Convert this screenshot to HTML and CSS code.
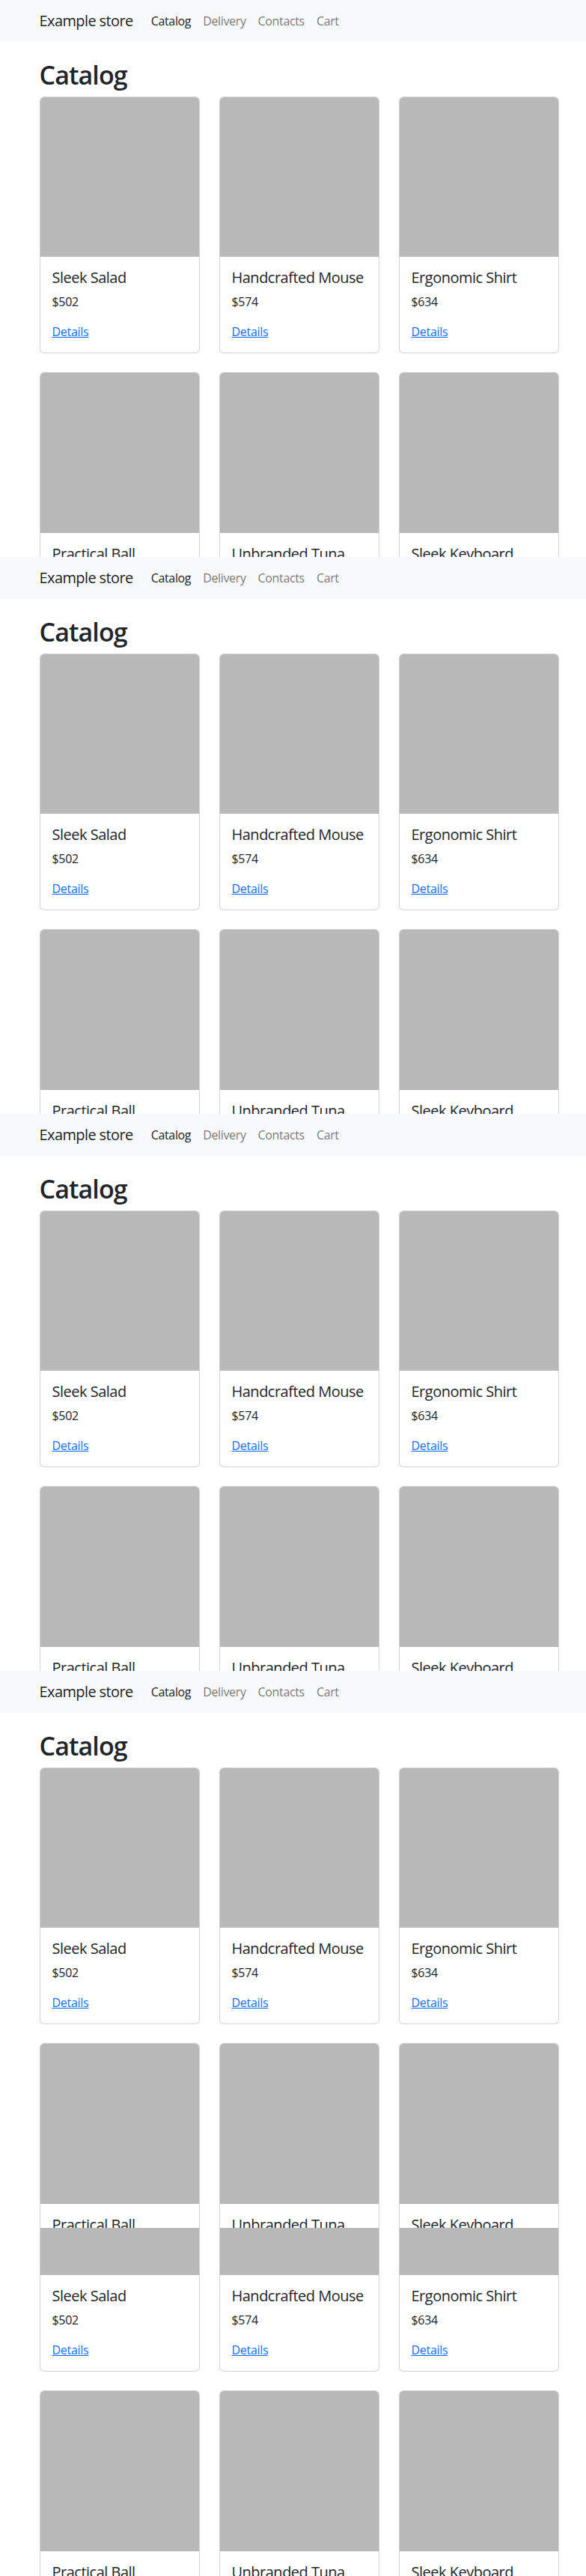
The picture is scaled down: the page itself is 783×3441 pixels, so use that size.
FILE: index.html
```html
<!DOCTYPE html>
<html lang="en">
<head>
<meta charset="utf-8">
<title>Example store</title>
<link rel="stylesheet" href="styles.css">
</head>
<body>

<section class="shot">
  <div class="page">
    <nav class="navbar"><div class="container nav-inner">
      <a class="brand" href="#">Example store</a>
      <a class="nav-link active" href="#">Catalog</a><a class="nav-link" href="#">Delivery</a><a class="nav-link" href="#">Contacts</a><a class="nav-link" href="#">Cart</a>
    </div></nav>
    <main class="container main">
      <h1 class="title">Catalog</h1>
      <div class="grid">
        <div class="card"><div class="card-img"></div><div class="card-body"><h5 class="card-title">Sleek Salad</h5><p class="price">$502</p><a class="details" href="#">Details</a></div></div>
        <div class="card"><div class="card-img"></div><div class="card-body"><h5 class="card-title">Handcrafted Mouse</h5><p class="price">$574</p><a class="details" href="#">Details</a></div></div>
        <div class="card"><div class="card-img"></div><div class="card-body"><h5 class="card-title">Ergonomic Shirt</h5><p class="price">$634</p><a class="details" href="#">Details</a></div></div>
        <div class="card"><div class="card-img"></div><div class="card-body"><h5 class="card-title">Practical Ball</h5><p class="price">$0</p><a class="details" href="#">Details</a></div></div>
        <div class="card"><div class="card-img"></div><div class="card-body"><h5 class="card-title">Unbranded Tuna</h5><p class="price">$0</p><a class="details" href="#">Details</a></div></div>
        <div class="card"><div class="card-img"></div><div class="card-body"><h5 class="card-title">Sleek Keyboard</h5><p class="price">$0</p><a class="details" href="#">Details</a></div></div>
      </div>
    </main>
  </div>
</section>

<section class="shot">
  <div class="page">
    <nav class="navbar"><div class="container nav-inner">
      <a class="brand" href="#">Example store</a>
      <a class="nav-link active" href="#">Catalog</a><a class="nav-link" href="#">Delivery</a><a class="nav-link" href="#">Contacts</a><a class="nav-link" href="#">Cart</a>
    </div></nav>
    <main class="container main">
      <h1 class="title">Catalog</h1>
      <div class="grid">
        <div class="card"><div class="card-img"></div><div class="card-body"><h5 class="card-title">Sleek Salad</h5><p class="price">$502</p><a class="details" href="#">Details</a></div></div>
        <div class="card"><div class="card-img"></div><div class="card-body"><h5 class="card-title">Handcrafted Mouse</h5><p class="price">$574</p><a class="details" href="#">Details</a></div></div>
        <div class="card"><div class="card-img"></div><div class="card-body"><h5 class="card-title">Ergonomic Shirt</h5><p class="price">$634</p><a class="details" href="#">Details</a></div></div>
        <div class="card"><div class="card-img"></div><div class="card-body"><h5 class="card-title">Practical Ball</h5><p class="price">$0</p><a class="details" href="#">Details</a></div></div>
        <div class="card"><div class="card-img"></div><div class="card-body"><h5 class="card-title">Unbranded Tuna</h5><p class="price">$0</p><a class="details" href="#">Details</a></div></div>
        <div class="card"><div class="card-img"></div><div class="card-body"><h5 class="card-title">Sleek Keyboard</h5><p class="price">$0</p><a class="details" href="#">Details</a></div></div>
      </div>
    </main>
  </div>
</section>

<section class="shot">
  <div class="page">
    <nav class="navbar"><div class="container nav-inner">
      <a class="brand" href="#">Example store</a>
      <a class="nav-link active" href="#">Catalog</a><a class="nav-link" href="#">Delivery</a><a class="nav-link" href="#">Contacts</a><a class="nav-link" href="#">Cart</a>
    </div></nav>
    <main class="container main">
      <h1 class="title">Catalog</h1>
      <div class="grid">
        <div class="card"><div class="card-img"></div><div class="card-body"><h5 class="card-title">Sleek Salad</h5><p class="price">$502</p><a class="details" href="#">Details</a></div></div>
        <div class="card"><div class="card-img"></div><div class="card-body"><h5 class="card-title">Handcrafted Mouse</h5><p class="price">$574</p><a class="details" href="#">Details</a></div></div>
        <div class="card"><div class="card-img"></div><div class="card-body"><h5 class="card-title">Ergonomic Shirt</h5><p class="price">$634</p><a class="details" href="#">Details</a></div></div>
        <div class="card"><div class="card-img"></div><div class="card-body"><h5 class="card-title">Practical Ball</h5><p class="price">$0</p><a class="details" href="#">Details</a></div></div>
        <div class="card"><div class="card-img"></div><div class="card-body"><h5 class="card-title">Unbranded Tuna</h5><p class="price">$0</p><a class="details" href="#">Details</a></div></div>
        <div class="card"><div class="card-img"></div><div class="card-body"><h5 class="card-title">Sleek Keyboard</h5><p class="price">$0</p><a class="details" href="#">Details</a></div></div>
      </div>
    </main>
  </div>
</section>

<section class="shot">
  <div class="page">
    <nav class="navbar"><div class="container nav-inner">
      <a class="brand" href="#">Example store</a>
      <a class="nav-link active" href="#">Catalog</a><a class="nav-link" href="#">Delivery</a><a class="nav-link" href="#">Contacts</a><a class="nav-link" href="#">Cart</a>
    </div></nav>
    <main class="container main">
      <h1 class="title">Catalog</h1>
      <div class="grid">
        <div class="card"><div class="card-img"></div><div class="card-body"><h5 class="card-title">Sleek Salad</h5><p class="price">$502</p><a class="details" href="#">Details</a></div></div>
        <div class="card"><div class="card-img"></div><div class="card-body"><h5 class="card-title">Handcrafted Mouse</h5><p class="price">$574</p><a class="details" href="#">Details</a></div></div>
        <div class="card"><div class="card-img"></div><div class="card-body"><h5 class="card-title">Ergonomic Shirt</h5><p class="price">$634</p><a class="details" href="#">Details</a></div></div>
        <div class="card"><div class="card-img"></div><div class="card-body"><h5 class="card-title">Practical Ball</h5><p class="price">$0</p><a class="details" href="#">Details</a></div></div>
        <div class="card"><div class="card-img"></div><div class="card-body"><h5 class="card-title">Unbranded Tuna</h5><p class="price">$0</p><a class="details" href="#">Details</a></div></div>
        <div class="card"><div class="card-img"></div><div class="card-body"><h5 class="card-title">Sleek Keyboard</h5><p class="price">$0</p><a class="details" href="#">Details</a></div></div>
      </div>
    </main>
  </div>
</section>

<section class="shot shot-last">
  <div class="page page-scrolled">
    <nav class="navbar"><div class="container nav-inner">
      <a class="brand" href="#">Example store</a>
      <a class="nav-link active" href="#">Catalog</a><a class="nav-link" href="#">Delivery</a><a class="nav-link" href="#">Contacts</a><a class="nav-link" href="#">Cart</a>
    </div></nav>
    <main class="container main">
      <h1 class="title">Catalog</h1>
      <div class="grid">
        <div class="card"><div class="card-img"></div><div class="card-body"><h5 class="card-title">Sleek Salad</h5><p class="price">$502</p><a class="details" href="#">Details</a></div></div>
        <div class="card"><div class="card-img"></div><div class="card-body"><h5 class="card-title">Handcrafted Mouse</h5><p class="price">$574</p><a class="details" href="#">Details</a></div></div>
        <div class="card"><div class="card-img"></div><div class="card-body"><h5 class="card-title">Ergonomic Shirt</h5><p class="price">$634</p><a class="details" href="#">Details</a></div></div>
        <div class="card"><div class="card-img"></div><div class="card-body"><h5 class="card-title">Practical Ball</h5><p class="price">$0</p><a class="details" href="#">Details</a></div></div>
        <div class="card"><div class="card-img"></div><div class="card-body"><h5 class="card-title">Unbranded Tuna</h5><p class="price">$0</p><a class="details" href="#">Details</a></div></div>
        <div class="card"><div class="card-img"></div><div class="card-body"><h5 class="card-title">Sleek Keyboard</h5><p class="price">$0</p><a class="details" href="#">Details</a></div></div>
      </div>
    </main>
  </div>
</section>

</body>
</html>
```

FILE: styles.css
```css
* { box-sizing: border-box; }

html, body {
  margin: 0;
  padding: 0;
  background: #fff;
}

body {
  font-family: "Open Sans", "Noto Sans", sans-serif;
  font-size: 16px;
  line-height: 1.5;
  color: #212529;
}

.shot {
  height: 744px;
  overflow: hidden;
}

.shot-last {
  height: 465px;
}

.page-scrolled {
  margin-top: -280px;
}

.container {
  width: 694.5px;
  margin-left: 52.5px;
}

.navbar {
  background: #f8f9fa;
  height: 56px;
  padding: 8px 0;
}

.nav-inner {
  display: flex;
  align-items: center;
  height: 40px;
}

.brand {
  font-size: 20px;
  line-height: 30px;
  padding: 5px 0;
  margin-right: 16px;
  color: rgba(0, 0, 0, 0.9);
  text-decoration: none;
  letter-spacing: -0.6px;
}

.nav-link {
  font-size: 16px;
  line-height: 24px;
  padding: 8px;
  color: rgba(0, 0, 0, 0.55);
  text-decoration: none;
  letter-spacing: -0.35px;
}

.nav-link.active {
  color: rgba(0, 0, 0, 0.9);
}

.main {
  padding-top: 24px;
}

.title {
  margin: 0 0 8px;
  font-size: 34px;
  line-height: 1.2;
  font-weight: 600;
  letter-spacing: -0.9px;
}

.grid {
  display: grid;
  grid-template-columns: repeat(3, 214.5px);
  column-gap: 25.5px;
  row-gap: 25px;
}

.card {
  border: 1px solid rgba(0, 0, 0, 0.175);
  border-radius: 6px;
  background: #fff;
  overflow: hidden;
}

.card-img {
  height: 213.5px;
  background: #b8b8b8;
}

.card-body {
  padding: 16px;
}

.card-title {
  margin: 0 0 8px;
  font-size: 20px;
  line-height: 1.2;
  font-weight: 500;
  letter-spacing: -0.5px;
  white-space: nowrap;
}

.price {
  margin: 0 0 16px;
  letter-spacing: -0.3px;
}

.details {
  color: #0d6efd;
  text-decoration: underline;
  letter-spacing: -0.3px;
}
```
